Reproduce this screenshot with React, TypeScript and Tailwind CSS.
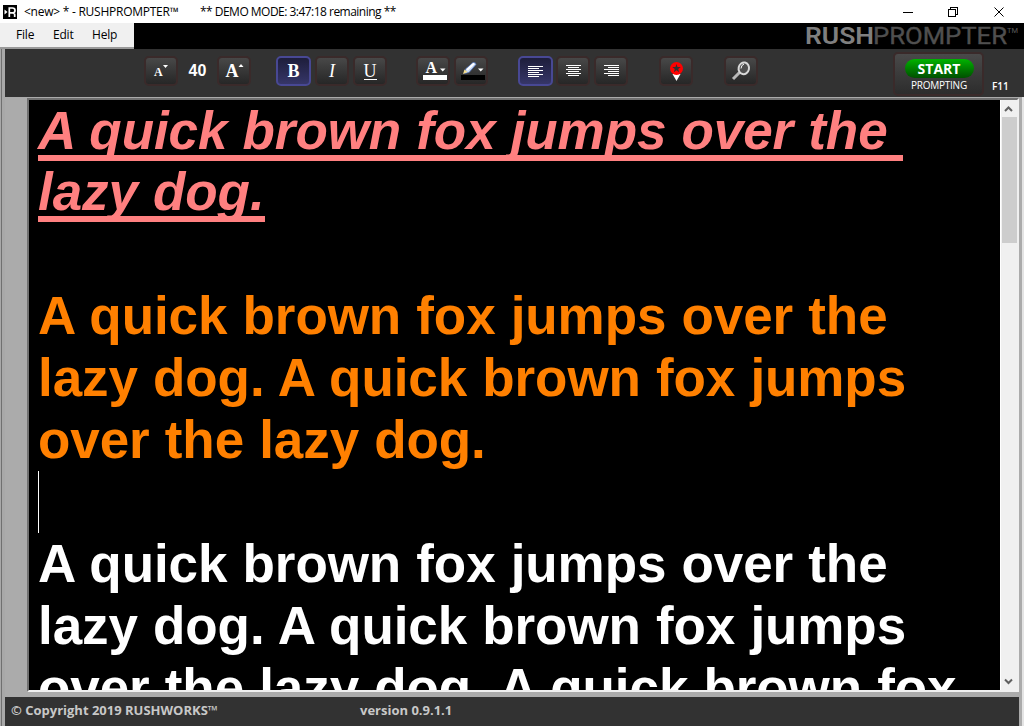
import type { ReactNode } from 'react';

const ui = "font-['Open_Sans','Noto_Sans',sans-serif]";

function ToolButton({ label, active = false, className = '', children }: { label: string; active?: boolean; className?: string; children: ReactNode }) {
  const look = active
    ? 'w-[35px] border-2 border-[#484894] bg-linear-to-b from-[#1c1c38] to-[#38386c]'
    : 'w-[34px] border-2 border-[#3a2a2a] bg-linear-to-b from-[#4b4b4b] to-[#242424]';
  return (
    <button aria-label={label} className={`flex h-[30px] shrink-0 items-center justify-center rounded-[5px] bg-origin-border text-white ${look} ${className}`}>
      {children}
    </button>
  );
}

function Lines({ rows }: { rows: [number, number][] }) {
  return (
    <svg width="16" height="12" viewBox="0 0 16 12" shapeRendering="crispEdges" fill="#fff">
      {rows.map(([x, w], i) => <rect key={i} x={x} y={i * 2} width={w} height="1" />)}
    </svg>
  );
}

const left: [number, number][] = [[0, 15], [0, 11], [0, 15], [0, 11], [0, 15], [0, 11]];
const center: [number, number][] = [[0, 15], [2, 11], [0, 15], [2, 11], [0, 15], [2, 11]];
const right: [number, number][] = [[0, 15], [4, 11], [0, 15], [4, 11], [0, 15], [4, 11]];

const orangeScript = [
  'A quick brown fox jumps over the',
  'lazy dog. A quick brown fox jumps',
  'over the lazy dog.',
];

const whiteScript = [
  'A quick brown fox jumps over the',
  'lazy dog. A quick brown fox jumps',
  'over the lazy dog. A quick brown fox',
];

export default function App() {
  return (
    <div className={`flex h-[726px] w-[1024px] flex-col overflow-hidden bg-[#ababab] ${ui}`}>
      <header className="flex h-[23px] shrink-0 items-center bg-white text-[12px] leading-[23px] text-black">
        <svg width="14" height="14" viewBox="0 0 14 14" className="ml-[3px]">
          <rect width="14" height="14" fill="#000" />
          <path d="M1.500 4.500v5L4.500 7z" fill="#fff" />
          <path d="M6.300 12V3h3.200q2.500 0 2.500 2.400T9.500 7.800H6.500M9.500 7.800q2.200 0 2.200 2V12" fill="none" stroke="#fff" strokeWidth="1.700" />
        </svg>
        <span className="ml-[7px] w-[176px] shrink-0 whitespace-pre tracking-[-0.25px]">{'<new> * - RUSHPROMPTER™'}</span>
        <span className="whitespace-pre tracking-[-0.52px]">** DEMO MODE: 3:47:18 remaining **</span>
        <svg width="112" height="20" viewBox="0 0 112 20" className="mr-[15px] ml-auto" fill="none" stroke="#000" shapeRendering="crispEdges">
          <path d="M6 10.500h10M51.500 7.500h7v7h-7zM53.500 7.500v-2h7v7h-2" />
          <path d="M97.500 5.500l9 9M106.500 5.500l-9 9" shapeRendering="auto" />
        </svg>
      </header>

      <div className="flex h-[26px] shrink-0 bg-black">
        <nav className="flex h-[26px] w-[134px] items-center border-b-2 border-[#999] bg-[#f0f0f0] pl-[16px] text-[12px] tracking-[-0.2px] text-black">
          <span className="w-[37px]">File</span>
          <span className="w-[39px]">Edit</span>
          <span>Help</span>
        </nav>
        <svg width="214" height="26" viewBox="0 0 214 26" className="mr-[5px] ml-auto overflow-visible" fontFamily="Roboto, sans-serif" fontSize="24.500">
          <text x="0" y="21" fontWeight="600" fill="#7f7f7f" textLength="69" lengthAdjust="spacingAndGlyphs">RUSH</text>
          <text x="68" y="21" fill="#4f4f4f" stroke="#4f4f4f" strokeWidth=".4" textLength="134" lengthAdjust="spacingAndGlyphs">PROMPTER</text>
          <text x="202" y="10" fontSize="8" fill="#5b5b5b" textLength="11" lengthAdjust="spacingAndGlyphs">TM</text>
        </svg>
      </div>

      <div className="flex min-h-0 flex-1">
        <div className="w-[5px] shrink-0 border-r-[3px] border-l border-r-[#a8a8a8] border-l-[#a8a8a8] bg-[#707070]" />
        <div className="flex min-w-0 flex-1 flex-col">
          <div className="flex h-[48px] shrink-0 items-start bg-[#323232] pt-[7px] pl-[139px]">
            <ToolButton label="Decrease font size">
              <svg width="30" height="26" viewBox="0 0 30 26" fill="#fff">
                <text x="8" y="18" fontSize="12" fontWeight="700" fontFamily="Liberation Serif, serif">A</text>
                <path d="M17 7h5l-2.500 3z" />
              </svg>
            </ToolButton>
            <span className="w-[39px] pt-[4px] text-center font-['Liberation_Sans',sans-serif] text-[16px] leading-[22px] font-bold text-white">40</span>
            <ToolButton label="Increase font size">
              <svg width="30" height="26" viewBox="0 0 30 26" fill="#fff">
                <text x="6.500" y="19" fontSize="18" fontWeight="700" fontFamily="Liberation Serif, serif">A</text>
                <path d="M19.500 9h5L22 6z" />
              </svg>
            </ToolButton>
            <ToolButton label="Bold" active className="ml-[25px]"><span className="font-['Liberation_Serif',serif] text-[18px] leading-[24px] font-bold">B</span></ToolButton>
            <ToolButton label="Italic" className="ml-[4px]"><span className="font-['Liberation_Serif',serif] text-[18px] leading-[24px] italic">I</span></ToolButton>
            <ToolButton label="Underline" className="ml-[4px]"><span className="border-b border-white font-['Liberation_Serif',serif] text-[18px] leading-[16px]">U</span></ToolButton>
            <ToolButton label="Text color" className="ml-[29px]">
              <svg width="30" height="26" viewBox="0 0 30 26" fill="#fff">
                <text x="7.500" y="15" fontSize="16" fontWeight="700" fontFamily="Liberation Serif, serif">A</text>
                <path d="M22 10.500h5.500l-2.750 3z" /><path d="M5 17h24v5H5z" />
              </svg>
            </ToolButton>
            <ToolButton label="Highlight color" className="ml-[4px]">
              <svg width="30" height="26" viewBox="0 0 30 26">
                <path d="M8.500 15.500l1-4.500 7.500-6.500q3-.5 3 2l-7 8z" fill="#c3d6f6" stroke="#4f6fae" strokeWidth=".8" />
                <path d="M11 12l7-6.500" stroke="#fff" strokeWidth="2" /><path d="M7 16l1.500-4.500 3 2.500z" fill="#f3dc8c" />
                <path d="M22 10.500h5.500l-2.750 3z" fill="#fff" /><path d="M5 17h24v5H5z" fill="#000" />
              </svg>
            </ToolButton>
            <ToolButton label="Align left" active className="ml-[30px]"><span className="pt-[2px]"><Lines rows={left} /></span></ToolButton>
            <ToolButton label="Align center" className="ml-[3px]"><span className="pl-px"><Lines rows={center} /></span></ToolButton>
            <ToolButton label="Align right" className="ml-[4px]"><span className="pl-px"><Lines rows={right} /></span></ToolButton>
            <ToolButton label="Marker" className="ml-[31px]">
              <svg width="30" height="26" viewBox="0 0 30 26">
                <path d="M11.500 16h8l-4 7z" fill="#fff" /><circle cx="15.500" cy="10.500" r="6.500" fill="#f00" />
                <path d="M15.500 6l1.060 3.040 3.220.07-2.570 1.940.93 3.090-2.640-1.850-2.640 1.850.93-3.090-2.570-1.940 3.220-.07z" fill="#303030" />
              </svg>
            </ToolButton>
            <ToolButton label="Find" className="ml-[31px]">
              <svg width="30" height="26" viewBox="0 0 30 26" fill="none">
                <path d="M7 21l6.500-6.500" stroke="#b8b8b8" strokeWidth="3" />
                <ellipse cx="17.800" cy="10.300" rx="5.200" ry="5.900" fill="#505050" stroke="#d8d8d8" strokeWidth="2" transform="rotate(12 17.800 10.300)" />
                <path d="M15 10.500q.2-3.500 3-4.500" stroke="#fff" />
              </svg>
            </ToolButton>
            <button className="mt-[-4px] ml-[135px] flex h-[44px] w-[91px] shrink-0 flex-col items-center rounded-[5px] border-2 border-[#3a2a2a] bg-linear-to-b from-[#4b4b4b] to-[#2b2b2b] bg-origin-border pt-[5px] pl-px text-white">
              <span className="h-[19px] w-[69px] rounded-full bg-linear-to-b from-[#00b400] to-[#005000] text-[14px] leading-[19px] font-bold">START</span>
              <span className="text-[10px] leading-[15px] tracking-[-0.25px]">PROMPTING</span>
            </button>
            <span className="mt-[23px] ml-[8px] text-[10px] leading-[15px] font-semibold text-white">F11</span>
          </div>

          <div className="flex min-h-0 flex-1 flex-col border-r-2 border-[#e4e4e4]">
            <main className="mt-px ml-[22px] flex h-[594px] w-[992px] shrink-0 border-2 border-t-[#707070] border-r-[#f0f0f0] border-b-[#f0f0f0] border-l-[#707070] bg-black">
              <section className="h-[590px] min-w-0 flex-1 overflow-hidden pl-[9px] font-['Liberation_Sans',Arial,sans-serif] text-[53px] leading-[62px] font-bold tracking-[-0.08px] [word-spacing:0.5px] whitespace-pre text-white">
                <div className="h-[61px] leading-[61px]"><span className="inline-block h-[61px] border-b-[6px] border-[#ff8080] leading-[61px] text-[#ff8080] italic">{'A quick brown fox jumps over the '}</span></div>
                <div className="h-[61px] leading-[61px]"><span className="inline-block h-[61px] border-b-[6px] border-[#ff8080] leading-[61px] text-[#ff8080] italic">lazy dog.</span></div>
                <div className="h-[63px]" />
                {orangeScript.map((line) => <div key={line} className="h-[62px] text-[#ff8000]">{line}</div>)}
                <div className="h-[62px] w-0 border-l border-white" />
                {whiteScript.map((line) => <div key={line} className="h-[62px]">{line}</div>)}
              </section>
              <aside className="flex w-[17px] shrink-0 flex-col items-center justify-between border-l border-white bg-[#f0f0f0]">
                <svg width="16" height="17" viewBox="0 0 16 17" fill="none" stroke="#606060" strokeWidth="2"><path d="M4 11l3.500-3.500L11 11" /></svg>
                <div className="mb-auto h-[126px] w-[15px] bg-[#cdcdcd]" />
                <svg width="16" height="17" viewBox="0 0 16 17" fill="none" stroke="#606060" strokeWidth="2"><path d="M4 6.500L7.500 10 11 6.500" /></svg>
              </aside>
            </main>

            <footer className="mt-auto flex h-[29px] w-[1014px] shrink-0 bg-[#323232] pl-[6px] text-[13px] leading-[27px] font-bold text-[#c8c8c8]">
              <span className="w-[349px]">© Copyright 2019 RUSHWORKS™</span>
              <span>version 0.9.1.1</span>
            </footer>
          </div>
        </div>
      </div>
    </div>
  );
}
